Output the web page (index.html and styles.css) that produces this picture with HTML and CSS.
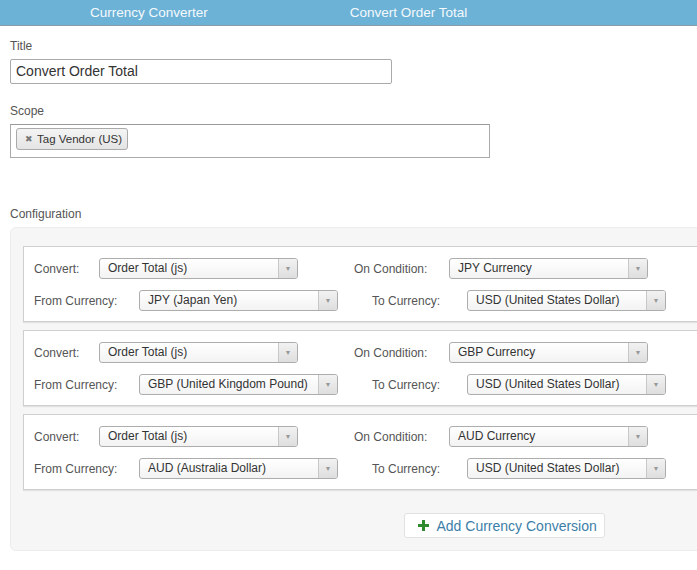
FILE: index.html
```html
<!DOCTYPE html>
<html>
<head>
<meta charset="utf-8">
<link rel="stylesheet" href="styles.css">
</head>
<body>
<div class="topbar">
  <span class="crumb crumb-1">Currency Converter</span>
  <span class="crumb crumb-2">Convert Order Total</span>
</div>
<div class="main">
  <label class="field-label">Title</label>
  <div class="text-input">Convert Order Total</div>

  <label class="field-label scope-label">Scope</label>
  <div class="scope-box">
    <span class="tag"><span class="tag-x">&#x2716;</span>Tag Vendor (US)</span>
  </div>

  <label class="field-label config-label">Configuration</label>
  <div class="config-panel">
    <div class="conv-row">
      <div class="line">
        <span class="lbl lbl-convert">Convert:</span>
        <div class="select"><span class="sel-text">Order Total (js)</span><span class="sel-arrow">&#9660;</span></div>
        <span class="lbl lbl-cond">On Condition:</span>
        <div class="select"><span class="sel-text">JPY Currency</span><span class="sel-arrow">&#9660;</span></div>
      </div>
      <div class="line">
        <span class="lbl lbl-from">From Currency:</span>
        <div class="select"><span class="sel-text">JPY (Japan Yen)</span><span class="sel-arrow">&#9660;</span></div>
        <span class="lbl lbl-to">To Currency:</span>
        <div class="select"><span class="sel-text">USD (United States Dollar)</span><span class="sel-arrow">&#9660;</span></div>
      </div>
    </div>
    <div class="conv-row">
      <div class="line">
        <span class="lbl lbl-convert">Convert:</span>
        <div class="select"><span class="sel-text">Order Total (js)</span><span class="sel-arrow">&#9660;</span></div>
        <span class="lbl lbl-cond">On Condition:</span>
        <div class="select"><span class="sel-text">GBP Currency</span><span class="sel-arrow">&#9660;</span></div>
      </div>
      <div class="line">
        <span class="lbl lbl-from">From Currency:</span>
        <div class="select"><span class="sel-text">GBP (United Kingdom Pound)</span><span class="sel-arrow">&#9660;</span></div>
        <span class="lbl lbl-to">To Currency:</span>
        <div class="select"><span class="sel-text">USD (United States Dollar)</span><span class="sel-arrow">&#9660;</span></div>
      </div>
    </div>
    <div class="conv-row">
      <div class="line">
        <span class="lbl lbl-convert">Convert:</span>
        <div class="select"><span class="sel-text">Order Total (js)</span><span class="sel-arrow">&#9660;</span></div>
        <span class="lbl lbl-cond">On Condition:</span>
        <div class="select"><span class="sel-text">AUD Currency</span><span class="sel-arrow">&#9660;</span></div>
      </div>
      <div class="line">
        <span class="lbl lbl-from">From Currency:</span>
        <div class="select"><span class="sel-text">AUD (Australia Dollar)</span><span class="sel-arrow">&#9660;</span></div>
        <span class="lbl lbl-to">To Currency:</span>
        <div class="select"><span class="sel-text">USD (United States Dollar)</span><span class="sel-arrow">&#9660;</span></div>
      </div>
    </div>
    <div class="add-wrap">
      <button class="add-btn"><svg class="plus" width="11" height="11" viewBox="0 0 11 11"><path d="M4 0h3v4h4v3H7v4H4V7H0V4h4z" fill="#2e8b2e"/></svg>Add Currency Conversion</button>
    </div>
  </div>
</div>
</body>
</html>
```

FILE: styles.css
```css
html, body {
  margin: 0;
  padding: 0;
  overflow: hidden;
  background: #ffffff;
  font-family: "Liberation Sans", Arial, sans-serif;
  color: #444;
}

.topbar {
  height: 25px;
  background: #6cb2d7;
  border-bottom: 1px solid #8a9ca8;
  display: flex;
  align-items: center;
  color: #f4f9fc;
  font-size: 13.5px;
}

.crumb-1 { margin-left: 90px; }
.crumb-2 { margin-left: 142px; }

.main {
  padding: 13px 0 0 10px;
}

.field-label {
  display: block;
  font-size: 12px;
  line-height: 15px;
  color: #555;
  margin-bottom: 5px;
}

.scope-label { margin-top: 20px; }
.config-label { margin-top: 49px; }

.text-input {
  box-sizing: border-box;
  width: 382px;
  height: 25px;
  border: 1px solid #aaa;
  border-radius: 2px;
  padding-left: 5px;
  font-size: 14px;
  line-height: 23px;
  color: #333;
}

.scope-box {
  box-sizing: border-box;
  width: 480px;
  height: 34px;
  border: 1px solid #aaa;
  border-top-color: #999;
  padding: 3px 5px;
}

.tag {
  display: inline-flex;
  align-items: center;
  box-sizing: border-box;
  height: 22px;
  padding: 0 5px 0 8px;
  border: 1px solid #aaa;
  border-radius: 3px;
  background: linear-gradient(#f4f4f4, #e4e4e4);
  font-size: 11.5px;
  color: #333;
}

.tag-x {
  font-size: 9px;
  color: #777;
  margin-right: 4px;
}

.config-panel {
  box-sizing: border-box;
  width: 988px;
  padding: 18px 12px 12px 12px;
  background: #f6f6f6;
  border: 1px solid #ececec;
  border-radius: 6px;
}

.conv-row {
  background: #fff;
  border: 1px solid #cfcfcf;
  box-shadow: 0 1px 1px rgba(0,0,0,0.08);
  padding: 11px 0 10px 10px;
  margin-bottom: 8px;
  display: flex;
  flex-direction: column;
  gap: 11px;
}

.line {
  display: flex;
  align-items: center;
}

.lbl {
  font-size: 12px;
  color: #555;
  flex: none;
}

.lbl-convert { width: 65px; }
.lbl-from { width: 105px; }
.lbl-cond { width: 95px; margin-left: 56px; }
.lbl-to { width: 95px; margin-left: 34px; }

.select {
  box-sizing: border-box;
  width: 199px;
  height: 21px;
  border: 1px solid #adadad;
  border-radius: 3px;
  background: linear-gradient(#ffffff, #f3f3f3);
  display: flex;
  align-items: stretch;
  font-size: 12px;
  color: #333;
  flex: none;
}

.sel-text {
  flex: 1;
  padding-left: 8px;
  line-height: 19px;
  white-space: nowrap;
  overflow: hidden;
}

.sel-arrow {
  width: 18px;
  border-left: 1px solid #c8c8c8;
  border-radius: 0 2px 2px 0;
  background: linear-gradient(#f2f2f2, #dedede);
  color: #999;
  font-size: 7px;
  line-height: 19px;
  text-align: center;
}

.add-wrap {
  display: flex;
  justify-content: center;
  padding-top: 15px;
}

.add-btn {
  box-sizing: border-box;
  height: 25px;
  width: 201px;
  background: #fff;
  border: 1px solid #e2e2e2;
  border-radius: 3px;
  font-family: "Liberation Sans", Arial, sans-serif;
  font-size: 14px;
  color: #3b7ea8;
  display: flex;
  align-items: center;
  padding: 0 0 0 13px;
}

.plus { margin-right: 8px; }
```
